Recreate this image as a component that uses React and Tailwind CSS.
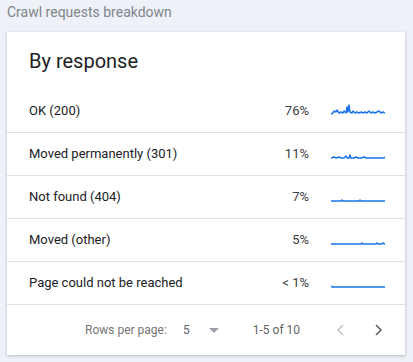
import React from "react";

const rows = [
    {
        label: "OK (200)",
        pct: "76%",
        points: "0,10 2,9 3,7 5,8 6,6 8,9 10,8 12,9 13,7 15,9 16,3 17,8 18,1 19,8 21,9 22,7 24,9 26,8 28,9 30,8 32,9 34,8 36,9 38,7 40,9 42,8 44,9 46,8 48,7 50,9 52,8 54,9",
    },
    {
        label: "Moved permanently (301)",
        pct: "11%",
        points: "0,10 3,9 5,10 8,9 10,10 13,10 15,8 16,10 18,10 19,7 20,10 23,10 25,9 27,10 30,10 33,9 35,10 40,10 45,10 50,10 53,10 54,9",
    },
    {
        label: "Not found (404)",
        pct: "7%",
        points: "0,10 10,10 11,9 12,10 28,10 29,9 30,10 54,10",
    },
    {
        label: "Moved (other)",
        pct: "5%",
        points: "0,10 30,10 31,9 32,10 45,10 46,9 47,10 51,10 52,9 54,10",
    },
    {
        label: "Page could not be reached",
        pct: "< 1%",
        points: "0,9 1,10 54,10",
    },
];

function Spark({ points }) {
    return (
        <svg width="54" height="14" viewBox="0 0 54 14" className="block">
            <polyline
                points={points}
                fill="none"
                stroke="#1a73e8"
                strokeWidth="1.5"
                strokeLinejoin="round"
            />
        </svg>
    );
}

export default function App() {
    return (
        <div
            className="w-[413px] h-[362px] bg-[#eef1f8] pl-[7px] pr-[8px] pt-[3px]"
            style={{ fontFamily: "Roboto, 'Liberation Sans', sans-serif" }}
        >
            <div className="text-[14px] leading-[18px] text-[#80868b] mb-[11px]">
                Crawl requests breakdown
            </div>
            <div className="bg-white w-[398px] h-[323px] shadow-[0_1px_3px_rgba(60,64,67,0.3)] flex flex-col">
                <div className="h-[57px] pl-[22px] pt-[17px] text-[20px] leading-[24px] text-[#202124]">
                    By response
                </div>
                {rows.map((row, i) => (
                    <div
                        key={row.label}
                        className={
                            "h-[43px] flex items-center pl-[22px] text-[13px] text-[#202124] " +
                            (i > 0 ? "border-t border-[#e0e0e0]" : "")
                        }
                    >
                        <div className="flex-1">{row.label}</div>
                        <div className="w-[60px] text-right text-[#3c4043]">{row.pct}</div>
                        <div className="ml-[22px] mr-[20px] mt-[1px]">
                            <Spark points={row.points} />
                        </div>
                    </div>
                ))}
                <div className="flex-1 border-t border-[#e0e0e0] flex items-center text-[12px] text-[#757575]">
                    <div className="ml-[78px] w-[98px]">Rows per page:</div>
                    <div className="text-[#5f6368]">5</div>
                    <svg width="10" height="5" viewBox="0 0 10 5" className="ml-[19px]">
                        <path d="M0 0 L10 0 L5 5 Z" fill="#9aa0a6" />
                    </svg>
                    <div className="ml-[34px] text-[#5f6368]">1-5 of 10</div>
                    <svg width="8" height="12" viewBox="0 0 8 12" className="ml-[36px]">
                        <path d="M7 1 L2 6 L7 11" fill="none" stroke="#c4c7ca" strokeWidth="1.6" />
                    </svg>
                    <svg width="8" height="12" viewBox="0 0 8 12" className="ml-[31px]">
                        <path d="M1 1 L6 6 L1 11" fill="none" stroke="#5f6368" strokeWidth="1.6" />
                    </svg>
                </div>
            </div>
        </div>
    );
}
